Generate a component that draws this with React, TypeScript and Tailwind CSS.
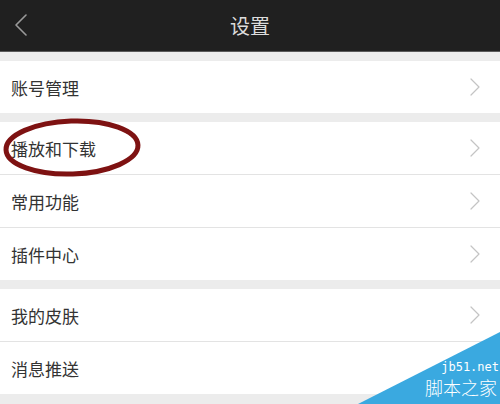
import { Fragment } from 'react';

const groups: string[][] = [
  ['账号管理'],
  ['播放和下载', '常用功能', '插件中心'],
  ['我的皮肤', '消息推送'],
];

function Chevron({ className, dir }: { className?: string; dir: 'left' | 'right' }) {
  const d = dir === 'left' ? 'M11 1 L1 11 L11 21' : 'M1 1 L9 9 L1 17';
  return (
    <svg className={className} viewBox={dir === 'left' ? '0 0 12 22' : '0 0 10 18'} fill="none">
      <path d={d} stroke="currentColor" strokeWidth={dir === 'left' ? 1.6 : 1.2} strokeLinecap="round" strokeLinejoin="round" />
    </svg>
  );
}

function Row({ label, last }: { label: string; last: boolean }) {
  return (
    <div className={`flex items-center justify-between bg-white pl-[11px] pr-[20px] ${last ? 'h-[52px]' : 'h-[53px] border-b border-[#e3e3e3]'}`}>
      <span className="text-[17px] leading-none text-[#333]">{label}</span>
      <Chevron dir="right" className="h-[18px] w-[10px] text-[#c4c4c4]" />
    </div>
  );
}

export default function App() {
  return (
    <div className="relative h-[404px] w-[500px] overflow-hidden bg-[#ececec]" style={{ fontFamily: '"Noto Sans CJK SC", "Noto Sans", sans-serif' }}>
      <div className="relative flex h-[52px] items-center justify-center border-b border-[#5a5a5a] bg-[#202020]">
        <Chevron dir="left" className="absolute left-[15px] top-[14px] h-[22px] w-[12px] text-[#9a9a9a]" />
        <span className="text-[20px] leading-none text-[#dcdcdc]">设置</span>
      </div>
      <div className="flex flex-col gap-[9px] pt-[9px]">
        {groups.map((g, i) => (
          <div key={i} className="flex flex-col">
            {g.map((label, j) => (
              <Fragment key={label}>
                <Row label={label} last={j === g.length - 1} />
              </Fragment>
            ))}
          </div>
        ))}
      </div>

      {/* annotation circle */}
      <svg className="absolute left-0 top-[116px] h-[64px] w-[146px]" viewBox="0 0 146 64">
        <ellipse cx="72" cy="31.5" rx="66" ry="26.5" fill="none" stroke="#7e1212" strokeWidth="5" transform="rotate(-2 72 31.5)" />
      </svg>

      {/* watermark */}
      <svg className="absolute bottom-0 right-0 h-[72px] w-[142px]" viewBox="0 0 142 72">
        <polygon points="0,72 142,0 142,72" fill="#3aa9e0" />
      </svg>
      <span className="absolute right-[1px] top-[361px] text-[12px] leading-[12px] text-white" style={{ fontFamily: '"DejaVu Sans Mono", monospace' }}>jb51.net</span>
      <span className="absolute right-[3px] top-[378px] text-[18px] leading-[18px] font-light text-white">脚本之家</span>
    </div>
  );
}
